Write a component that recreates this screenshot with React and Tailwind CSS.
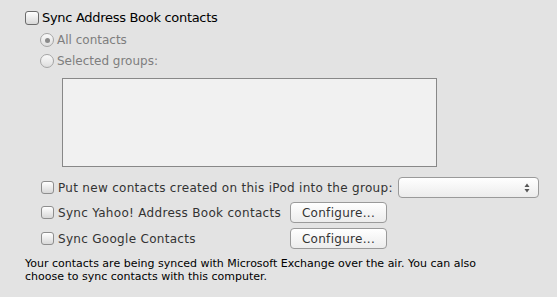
function Check({ big }) {
  return (
    <span
      className={`inline-block shrink-0 rounded-[3px] border bg-gradient-to-b from-white to-[#d8d8d8] ${big ? 'w-[14px] h-[14px] border-[#6b6b6b]' : 'w-[13px] h-[13px] border-[#8e8e8e]'}`}
    />
  )
}

function Radio({ on }) {
  return (
    <span className="inline-flex items-center justify-center shrink-0 w-[14px] h-[14px] rounded-full border border-[#a5a5a5] bg-gradient-to-b from-[#fafafa] to-[#dedede]">
      {on && <span className="block w-[5px] h-[5px] rounded-full bg-[#8a8a8a]" />}
    </span>
  )
}

function Button({ children }) {
  return (
    <div className="flex items-center justify-center w-[97px] h-[21px] rounded-[4px] border border-[#9a9a9a] bg-gradient-to-b from-white to-[#ececec] text-[12px] tracking-[0.3px] text-[#333]">
      {children}
    </div>
  )
}

export default function App() {
  return (
    <div className="w-[557px] h-[297px] bg-[#e3e3e3] overflow-hidden" style={{ fontFamily: '"DejaVu Sans", sans-serif' }}>
      <div className="pt-[8px] pl-[25px]">
        <div className="flex items-center h-[20px] gap-[3px] text-[13px] tracking-[-0.3px] text-black">
          <Check big />
          <span>Sync Address Book contacts</span>
        </div>

        <div className="pl-[15px] text-[12px] text-[#7e7e7e]">
          <div className="flex items-center h-[22px] mt-[1px] gap-[3px]">
            <Radio on />
            <span>All contacts</span>
          </div>
          <div className="flex items-center h-[20px] gap-[3px]">
            <Radio />
            <span>Selected groups:</span>
          </div>
        </div>

        <div className="ml-[37px] mt-[7px] w-[375px] h-[89px] border border-[#888] bg-[#f1f1f1]" />

        <div className="pl-[16px] text-[12px] tracking-[0.3px] text-[#333]">
          <div className="flex items-center h-[21px] mt-[10px] gap-[4px]">
            <Check />
            <span className="w-[336px] whitespace-nowrap">Put new contacts created on this iPod into the group:</span>
            <div className="relative w-[141px] h-[21px] rounded-[4px] border border-[#9a9a9a] bg-gradient-to-b from-white to-[#ececec]">
              <svg className="absolute right-[8px] top-[5px]" width="6" height="10" viewBox="0 0 6 10">
                <path d="M3 0.5 L5.5 4 L0.5 4 Z" fill="#555" />
                <path d="M3 9.5 L5.5 6 L0.5 6 Z" fill="#555" />
              </svg>
            </div>
          </div>
          <div className="flex items-center h-[21px] mt-[4px] gap-[4px]">
            <Check />
            <span className="w-[228px] whitespace-nowrap">Sync Yahoo! Address Book contacts</span>
            <Button>Configure...</Button>
          </div>
          <div className="flex items-center h-[21px] mt-[5px] gap-[4px]">
            <Check />
            <span className="w-[228px] whitespace-nowrap">Sync Google Contacts</span>
            <Button>Configure...</Button>
          </div>
        </div>

        <p className="mt-[8px] text-[11px] leading-[13px] text-black">
          Your contacts are being synced with Microsoft Exchange over the air. You can also
          <br />
          choose to sync contacts with this computer.
        </p>
      </div>
    </div>
  )
}
